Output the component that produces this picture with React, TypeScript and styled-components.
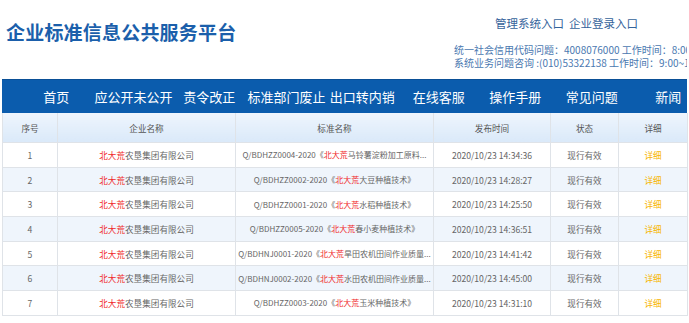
import React from "react";
import styled, { createGlobalStyle } from "styled-components";

const GlobalStyle = createGlobalStyle`
	html, body {
		margin: 0;
		padding: 0;
		overflow: hidden;
		background: #fff;
		font-family: "Noto Sans CJK SC", "Noto Sans", sans-serif;
	}
`;

// menu entries of the blue bar
const navItems = ["首页", "应公开未公开", "责令改正", "标准部门废止", "出口转内销", "在线客服", "操作手册", "常见问题", "新闻"];

// rows of the standards list
const rows = [
	{ code: "Q/BDHZZ0004-2020", name: "马铃薯淀粉加工原料...", cut: true, time: "2020/10/23 14:34:36" },
	{ code: "Q/BDHZZ0002-2020", name: "大豆种植技术", cut: false, time: "2020/10/23 14:28:27" },
	{ code: "Q/BDHZZ0001-2020", name: "水稻种植技术", cut: false, time: "2020/10/23 14:25:50" },
	{ code: "Q/BDHZZ0005-2020", name: "春小麦种植技术", cut: false, time: "2020/10/23 14:36:51" },
	{ code: "Q/BDHNJ0001-2020", name: "旱田农机田间作业质量...", cut: true, time: "2020/10/23 14:41:42" },
	{ code: "Q/BDHNJ0002-2020", name: "水田农机田间作业质量...", cut: true, time: "2020/10/23 14:45:00" },
	{ code: "Q/BDHZZ0003-2020", name: "玉米种植技术", cut: false, time: "2020/10/23 14:31:10" },
];

function App() {
	return (
		<Page>
			<GlobalStyle />
			{/* Top zone */}
			<Header>
				<Title>企业标准信息公共服务平台</Title>
				<Side>
					<Links>
						<a>管理系统入口</a>
						<a>企业登录入口</a>
					</Links>
					<Info>统一社会信用代码问题：4008076000 工作时间：8:00~17:00</Info>
					<Info>系统业务问题咨询 :(010)53322138 工作时间：9:00~17:00</Info>
				</Side>
			</Header>

			{/* Menu */}
			<Nav>
				{navItems.map((item) => (
					<NavItem key={item}>{item}</NavItem>
				))}
			</Nav>

			{/* Table */}
			<Table>
				<colgroup>
					<col style={{ width: 55 }} />
					<col style={{ width: 178 }} />
					<col style={{ width: 198 }} />
					<col style={{ width: 117 }} />
					<col style={{ width: 68 }} />
					<col style={{ width: 69 }} />
				</colgroup>
				<thead>
					<tr>
						<Th>序号</Th>
						<Th>企业名称</Th>
						<Th>标准名称</Th>
						<Th>发布时间</Th>
						<Th>状态</Th>
						<Th>详细</Th>
					</tr>
				</thead>
				<tbody>
					{rows.map((row, i) => (
						<Row key={row.code} $alt={i % 2 === 1}>
							<td>{i + 1}</td>
							<td>
								<Red>北大荒</Red>农垦集团有限公司
							</td>
							<NameCell>
								{row.code}《<Red>北大荒</Red>
								{row.name}
								{row.cut ? "" : "》"}
							</NameCell>
							<td>{row.time}</td>
							<td>现行有效</td>
							<td>
								<Detail>详细</Detail>
							</td>
						</Row>
					))}
				</tbody>
			</Table>
		</Page>
	);
}

const Page = styled.div`
	width: 685px;
	padding: 0 2px;
	overflow: hidden;
`;

const Header = styled.header`
	display: flex;
	justify-content: space-between;
	height: 79px;
	overflow: hidden;
`;

const Title = styled.h1`
	margin: 0;
	padding: 21px 0 0 4px;
	font-size: 19px;
	line-height: 22px;
	font-weight: 700;
	color: #1b5fab;
	letter-spacing: 0.2px;
	white-space: nowrap;
`;

const Side = styled.div`
	display: flex;
	flex-direction: column;
	width: 233px;
	padding-top: 15px;
	white-space: nowrap;
`;

const Links = styled.div`
	display: flex;
	gap: 5px;
	margin-left: 41px;
	margin-bottom: 12px;
	font-size: 11.5px;
	line-height: 16px;
	color: #34639b;

	a {
		cursor: pointer;
	}
`;

const Info = styled.div`
	font-size: 10px;
	line-height: 13px;
	color: #4a78b0;
`;

const Nav = styled.nav`
	display: flex;
	height: 34px;
	padding-left: 16px;
	background: #0b5cad;
	border-top: 1px solid #0a4f96;
	box-sizing: border-box;
`;

const NavItem = styled.a`
	width: 76.5px;
	flex: none;
	text-align: center;
	font-size: 13px;
	line-height: 33px;
	color: #fff;
	white-space: nowrap;
	cursor: pointer;
`;

const Table = styled.table`
	width: 685px;
	table-layout: fixed;
	border-collapse: collapse;
	font-size: 8.6px;
	color: #666;

	td {
		height: 23.7px;
		padding: 0;
		text-align: center;
		white-space: nowrap;
		overflow: hidden;
		border: 1px solid #dfe3e8;
		border-top: none;
	}
`;

const NameCell = styled.td`
	font-size: 8px;
	text-overflow: ellipsis;
`;

const Th = styled.th`
	height: 29px;
	padding: 0;
	font-size: 8.6px;
	font-weight: 400;
	color: #555;
	background: linear-gradient(#eef5fd, #dae9f9);
	border: 1px solid #dfe3e8;
	border-top: none;
`;

const Row = styled.tr<{ $alt: boolean }>`
	background: ${(p) => (p.$alt ? "#eff5fc" : "#fff")};
`;

const Red = styled.span`
	color: #f02a2a;
`;

const Detail = styled.a`
	color: #f7b500;
	cursor: pointer;
`;

export default App;
